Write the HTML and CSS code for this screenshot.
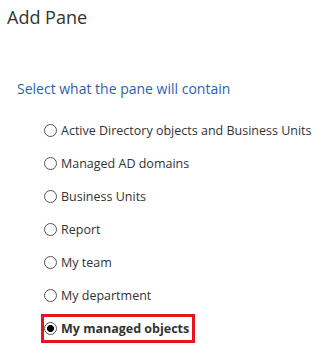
FILE: index.html
```html
<!DOCTYPE html>
<html lang="en">
<head>
    <meta charset="UTF-8">
    <meta name="viewport" content="width=device-width, initial-scale=1.0">
    <title>Add Pane</title>
    <link rel="stylesheet" href="styles.css">
</head>
<body>
    <div class="pane">
        <h1>Add Pane</h1>
        <p class="prompt">Select what the pane will contain</p>

        <div class="options">
            <label class="option"><input type="radio" name="content"> Active Directory objects and Business Units</label>
            <label class="option"><input type="radio" name="content"> Managed AD domains</label>
            <label class="option"><input type="radio" name="content"> Business Units</label>
            <label class="option"><input type="radio" name="content"> Report</label>
            <label class="option"><input type="radio" name="content"> My team</label>
            <label class="option"><input type="radio" name="content"> My department</label>
            <label class="option selected"><input type="radio" name="content" checked> My managed objects</label>
        </div>
    </div>
</body>
</html>
```

FILE: styles.css
```css
:root {
    --text-color: #333333;
    --link-color: #2b5faf;
    --mark-color: #e8131f;
}

body {
    font-family: "Open Sans", "Noto Sans", sans-serif;
    background: white;
    color: var(--text-color);
    margin: 0;
    padding: 0;
}

.pane {
    padding: 4px 7px;
}

h1 {
    font-size: 18px;
    font-weight: normal;
    margin: 0;
    line-height: 26px;
}

.prompt {
    color: var(--link-color);
    font-size: 14px;
    margin: 49px 0 0 10px;
    line-height: 20px;
}

.options {
    display: flex;
    flex-direction: column;
    gap: 4px;
    margin: 17px 0 0 37px;
}

.option {
    display: flex;
    align-items: center;
    gap: 4px;
    font-size: 12.5px;
    line-height: 23px;
    align-self: flex-start;
    border: 3px solid transparent;
    margin-left: -3px;
    padding-right: 3px;
}

.option input {
    appearance: none;
    box-sizing: border-box;
    margin: 0;
    width: 13px;
    height: 13px;
    border: 1px solid #555;
    border-radius: 50%;
    background: white;
}

.option input:checked {
    background: radial-gradient(circle, #000 0 3.2px, white 3.8px);
}

.option.selected {
    border-color: var(--mark-color);
    font-weight: bold;
}
```
